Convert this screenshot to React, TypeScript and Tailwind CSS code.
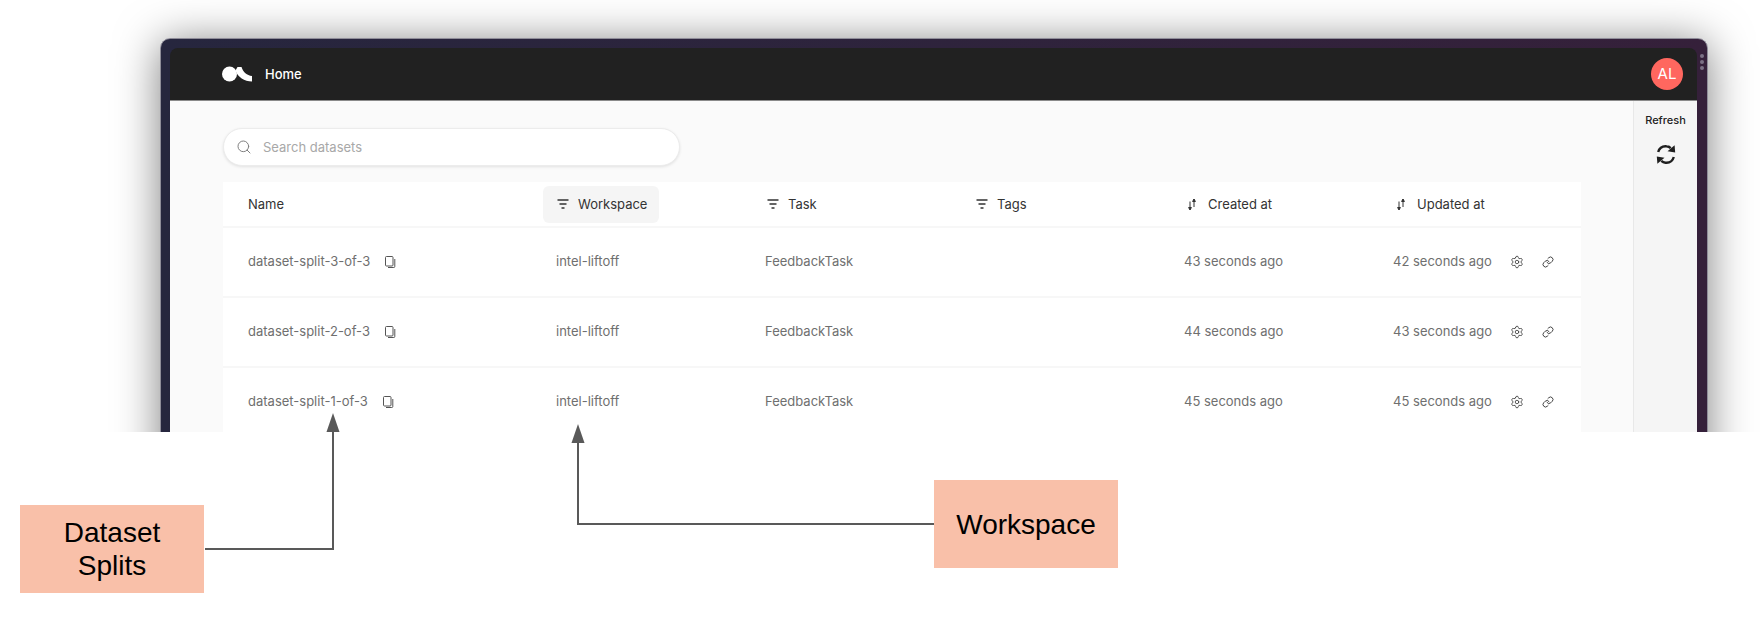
import { Link, Search, Settings } from 'lucide-react'

const ROWS = [
  { name: 'dataset-split-3-of-3', created: '43 seconds ago', updated: '42 seconds ago' },
  { name: 'dataset-split-2-of-3', created: '44 seconds ago', updated: '43 seconds ago' },
  { name: 'dataset-split-1-of-3', created: '45 seconds ago', updated: '45 seconds ago' },
]

const COLS = 'grid grid-cols-[308px_210px_209px_209px_209px_213px]'

function FilterIcon() {
  return (
    <svg width="12" height="10" viewBox="0 0 12 10" className="text-[#333]">
      <path d="M0.5 1h11M2.5 5h7M4.5 9h3" stroke="currentColor" strokeWidth="1.3" fill="none" />
    </svg>
  )
}

function SortIcon() {
  return (
    <svg width="8" height="13" viewBox="0 0 8 13" className="ml-[3px] text-[#333]">
      <path d="M2 3.5v8M0.6 9.5 2 12l1.4-2.5zM6 1v8M4.6 3.5 6 1l1.4 2.5z" stroke="currentColor" strokeWidth="1" fill="currentColor" />
    </svg>
  )
}

function CopyIcon() {
  return (
    <svg width="11" height="12" viewBox="0 0 11 12" fill="none" stroke="#555" strokeWidth="1">
      <rect x="0.5" y="0.5" width="7.5" height="9.5" rx="1" />
      <path d="M9.8 3v7.5a1 1 0 0 1-1 1H3" />
    </svg>
  )
}

function RefreshIcon() {
  return (
    <svg width="20" height="21" viewBox="0 0 20 21" className="text-[#1f1f1f]">
      <path d="M2.2 8C3.5 3.6 7 2 10.5 2.3c1.7.1 3 .7 4.2 1.8" stroke="currentColor" strokeWidth="2.4" fill="none" />
      <path d="M11.5 7.2 19.2 8.4 18.6 1.2z" fill="currentColor" />
      <path d="M17.8 13c-1.3 4.4-4.8 6-8.3 5.7-1.7-.1-3-.7-4.2-1.8" stroke="currentColor" strokeWidth="2.4" fill="none" />
      <path d="M8.5 13.8.8 12.6l.6 7.2z" fill="currentColor" />
    </svg>
  )
}

function Logo() {
  return (
    <svg width="30" height="16" viewBox="0 0 30 16" fill="white">
      <circle cx="7.5" cy="8" r="7.5" />
      <path d="M15.5 1H19.5C21 6 25 9.5 30 10V15.5C22.5 15.5 15.5 11 13.5 4.5z" />
    </svg>
  )
}

function HeaderCell({ label, active, icon }: { label: string; active?: boolean; icon: 'filter' | 'sort' }) {
  return (
    <div className="flex items-center pl-3">
      <div className={`flex h-[37px] items-center rounded-md pl-[14px] pr-[12px] ${icon === 'filter' ? 'gap-[9px]' : 'gap-[12px]'} ${active ? 'bg-[#f5f5f5]' : ''}`}>
        {icon === 'filter' ? <FilterIcon /> : <SortIcon />}
        <span className="pt-[2px]">{label}</span>
      </div>
    </div>
  )
}

export default function App() {
  return (
    <div className="relative h-[623px] w-[1763px] overflow-hidden bg-white font-['Inter',sans-serif]">
      <div className="h-[432px] overflow-hidden pl-[160px] pt-[38px]">
        <div className="relative h-[500px] w-[1548px] rounded-t-[10px] border border-[#8f8d99] bg-gradient-to-r from-[#26263e] to-[#35203a] pl-[9px] pr-[10px] pt-[9px] shadow-[0_4px_44px_rgba(0,0,0,0.5)]">
          <div className="absolute right-[3px] top-[15px] flex flex-col gap-[2px]">
            <span className="h-1 w-1 rounded-full bg-[#7b7185]" />
            <span className="h-1 w-1 rounded-full bg-[#7b7185]" />
            <span className="h-1 w-1 rounded-full bg-[#7b7185]" />
          </div>
          <div className="flex h-[53px] items-center justify-between rounded-t-lg border-b border-[#8a8a8a] bg-[#212121] pl-[52px] pr-[14px]">
            <div className="flex items-center gap-[13px]">
              <Logo />
              <span className="pt-[1px] text-[13px] font-medium text-white">Home</span>
            </div>
            <div className="flex h-8 w-8 items-center justify-center rounded-full bg-[#ff675f] text-[15px] text-white">AL</div>
          </div>
          <div className="flex h-[440px] bg-[#fafafa]">
            <div className="flex-1 pl-[53px] pt-[27px]">
              <div className="flex h-[38px] w-[457px] items-center rounded-full border border-[#ececec] bg-white pl-[12px] shadow-[0_1px_3px_rgba(0,0,0,0.1)]">
                <Search className="h-4 w-4 text-[#7f7f7f]" strokeWidth={1.5} />
                <span className="ml-[11px] pt-[1px] text-[13px] text-[#a8a8a8]">Search datasets</span>
              </div>
              <div className="mt-[16px] w-[1358px] bg-white text-[13px]">
                <div className={`${COLS} h-[46px] items-center border-b-2 border-[#f7f7f7] text-[#333]`}>
                  <div className="pl-[25px] pt-[2px]">Name</div>
                  <HeaderCell label="Workspace" icon="filter" active />
                  <HeaderCell label="Task" icon="filter" />
                  <HeaderCell label="Tags" icon="filter" />
                  <HeaderCell label="Created at" icon="sort" />
                  <HeaderCell label="Updated at" icon="sort" />
                </div>
                {ROWS.map((row) => (
                  <div key={row.name} className={`${COLS} h-[70px] items-center border-b-2 border-[#f7f7f7] text-[#6f6f6f]`}>
                    <div className="flex items-center gap-[15px] pl-[25px]">
                      <span>{row.name}</span>
                      <CopyIcon />
                    </div>
                    <div className="pl-[25px]">intel-liftoff</div>
                    <div className="pl-[24px]">FeedbackTask</div>
                    <div />
                    <div className="pl-[25px]">{row.created}</div>
                    <div className="flex items-center pl-[25px]">
                      <span className="whitespace-nowrap">{row.updated}</span>
                      <Settings className="ml-[18px] h-[14px] w-[14px] shrink-0 text-[#444]" strokeWidth={1.5} />
                      <Link className="ml-[18px] h-[12px] w-[12px] shrink-0 text-[#444]" strokeWidth={2} />
                    </div>
                  </div>
                ))}
              </div>
            </div>
            <div className="flex w-[64px] flex-col items-center border-l border-[#e8e8e8] bg-[#f5f5f5] pt-[10px]">
              <span className="text-[11px] font-medium leading-[18px] text-[#222]">Refresh</span>
              <div className="mt-[15px]">
                <RefreshIcon />
              </div>
            </div>
          </div>
        </div>
      </div>

      <svg className="absolute left-0 top-0" width="1763" height="623" fill="none">
        <path d="M205 549H333V430" stroke="#595959" strokeWidth="2" />
        <path d="M333 413l-6.5 19h13z" fill="#595959" />
        <path d="M934 524H578V441" stroke="#595959" strokeWidth="2" />
        <path d="M578 424l-6.5 19h13z" fill="#595959" />
      </svg>

      <div className="absolute left-[20px] top-[505px] flex h-[88px] w-[184px] items-center justify-center bg-[#f9c0a9] text-center font-['Liberation_Sans',sans-serif] text-[28px] leading-[33px] text-black">
        Dataset
        <br />
        Splits
      </div>
      <div className="absolute left-[934px] top-[480px] flex h-[88px] w-[184px] items-center justify-center bg-[#f9c0a9] pt-[2px] font-['Liberation_Sans',sans-serif] text-[28px] text-black">
        Workspace
      </div>
    </div>
  )
}
